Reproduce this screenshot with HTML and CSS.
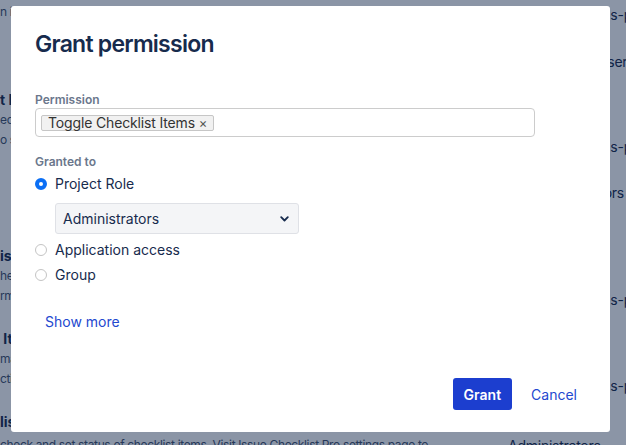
FILE: index.html
```html
<!DOCTYPE html>
<html>
<head>
<meta charset="utf-8">
<link rel="stylesheet" href="styles.css">
</head>
<body>
<div class="page">
  <div class="col-left">
    <div class="desc first">n in the issue.</div>
    <div class="row row-1">
      <div class="title">t Items</div>
      <div class="desc">ecklist items on issues.</div>
      <div class="desc">o set status of items.</div>
    </div>
    <div class="row row-2">
      <div class="title">ist Items</div>
      <div class="desc">heck checklist items.</div>
      <div class="desc">rmission to edit.</div>
    </div>
    <div class="row">
      <div class="title">&nbsp;Items</div>
      <div class="desc">mark checklist items.</div>
      <div class="desc">ction on issues.</div>
    </div>
    <div class="row">
      <div class="title">list Items</div>
      <div class="desc last">check and set status of checklist items. Visit Issue Checklist Pro settings page to</div>
    </div>
  </div>
  <div class="col-right">
    <div class="cell c1">atlassian-addons-project-access</div>
    <div class="cell c2">Any logged in user</div>
    <div class="cell c3">atlassian-addons-project-access</div>
    <div class="cell c4">jira-administrators</div>
    <div class="cell c5">atlassian-addons-project-access</div>
    <div class="cell c6">atlassian-addons-project-access</div>
    <div class="cell c7">Administrators</div>
  </div>
</div>
<div class="blanket"></div>
<div class="modal">
  <h1 class="modal-title">Grant permission</h1>
  <div class="label label-first">Permission</div>
  <div class="multi-input">
    <span class="tag">Toggle Checklist Items <span class="tag-x">×</span></span>
  </div>
  <div class="label label-granted">Granted to</div>
  <div class="radio-row radio-first"><span class="radio checked"></span><span>Project Role</span></div>
  <div class="select">
    <span>Administrators</span>
    <svg class="chev" width="9" height="6" viewBox="0 0 9 6"><polyline points="1.2,1.2 4.5,4.5 7.8,1.2" fill="none" stroke="#172b4d" stroke-width="1.8" stroke-linecap="round" stroke-linejoin="round"/></svg>
  </div>
  <div class="radio-row radio-app"><span class="radio"></span><span>Application access</span></div>
  <div class="radio-row radio-group"><span class="radio"></span><span>Group</span></div>
  <div class="show-more">Show more</div>
  <div class="footer">
    <button class="btn btn-primary">Grant</button>
    <button class="btn btn-link">Cancel</button>
  </div>
</div>
</body>
</html>
```
FILE: styles.css
```css
html, body {
  margin: 0;
  padding: 0;
  width: 626px;
  height: 445px;
  overflow: hidden;
  font-family: Inter, "Noto Sans", sans-serif;
  background: #ffffff;
}

.page {
  display: flex;
  width: 626px;
  height: 445px;
  overflow: hidden;
  color: #172b4d;
}

.col-left {
  width: 508px;
  flex: none;
  white-space: nowrap;
  overflow: hidden;
}

.col-right {
  flex: none;
  white-space: nowrap;
  font-size: 14px;
  line-height: 20px;
  letter-spacing: -0.25px;
  color: #172b4d;
}

.title {
  font-size: 14px;
  font-weight: 700;
  line-height: 20px;
  height: 20px;
}

.desc {
  font-size: 12px;
  line-height: 20px;
  height: 20px;
  letter-spacing: -0.35px;
  color: #42526e;
}

.desc.first { margin-top: 2px; }
.desc.last { margin-top: 3px; }
.row { margin-top: 23px; }
.row-1 { margin-top: 68px; }
.row-2 { margin-top: 96px; }

.cell { height: 20px; }
.c1 { margin-top: 5px; }
.c2 { margin-top: 27px; }
.c3 { margin-top: 65px; }
.c4 { margin-top: 26px; }
.c5 { margin-top: 87px; }
.c6 { margin-top: 66px; }
.c7 { margin-top: 40px; }

.blanket {
  position: absolute;
  inset: 0;
  background: rgba(9, 30, 66, 0.47);
}

.modal {
  position: absolute;
  left: 11px;
  top: 6px;
  width: 599px;
  height: 426px;
  box-sizing: border-box;
  padding: 24px 23px 22px 24px;
  background: #ffffff;
  border-radius: 3px;
  display: flex;
  flex-direction: column;
  color: #172b4d;
}

.modal-title {
  margin: 0;
  font-size: 23px;
  line-height: 28px;
  font-weight: 600;
  letter-spacing: -0.75px;
  color: #172b4d;
}

.label {
  font-size: 12px;
  line-height: 16px;
  font-weight: 600;
  color: #6b778c;
}

.label-first { margin-top: 34px; }
.label-granted { margin-top: 17px; }

.multi-input {
  width: 500px;
  height: 29px;
  box-sizing: border-box;
  border: 1px solid #cccccc;
  border-radius: 4px;
  display: flex;
  align-items: center;
  padding: 0 5px;
}

.tag {
  display: inline-flex;
  align-items: center;
  height: 16px;
  box-sizing: border-box;
  padding: 0 6px;
  border: 1px solid #c6c6c6;
  border-radius: 2px;
  background: #f1f1f1;
  font-size: 14px;
  line-height: 14px;
  letter-spacing: -0.15px;
  color: #333333;
  white-space: pre;
}

.tag-x {
  color: #555555;
  font-size: 13px;
}

.radio-row {
  display: flex;
  align-items: center;
  gap: 8px;
  height: 20px;
  font-size: 14px;
  line-height: 20px;
  color: #172b4d;
}

.radio-first { margin-top: 4px; }
.radio-app { margin-top: 6px; }
.radio-group { margin-top: 5px; }

.radio {
  width: 12px;
  height: 12px;
  box-sizing: border-box;
  border-radius: 50%;
  border: 1px solid #c4c4c4;
  background: #ffffff;
  flex: none;
}

.radio.checked {
  border: 4px solid #0b6ff5;
  background: #ffffff;
}

.select {
  margin-top: 9px;
  margin-left: 20px;
  width: 244px;
  height: 31px;
  box-sizing: border-box;
  background: #f4f5f7;
  border: 1px solid #dfe1e6;
  border-radius: 3px;
  display: flex;
  align-items: center;
  justify-content: space-between;
  padding: 0 9px 0 7px;
  font-size: 14px;
  color: #172b4d;
}

.chev { display: block; }

.show-more {
  margin-top: 27px;
  margin-left: 10px;
  font-size: 14px;
  line-height: 20px;
  color: #2348cf;
}

.footer {
  margin-top: auto;
  display: flex;
  justify-content: flex-end;
  gap: 9px;
}

.btn {
  height: 32px;
  padding: 0 10px;
  border: none;
  border-radius: 3px;
  font-family: Inter, "Noto Sans", sans-serif;
  font-size: 14px;
  background: none;
}

.btn-primary {
  padding: 0 11px;
  background: #1c3ecf;
  color: #ffffff;
  font-weight: 600;
}

.btn-link {
  color: #2348cf;
  font-weight: 400;
}
```
